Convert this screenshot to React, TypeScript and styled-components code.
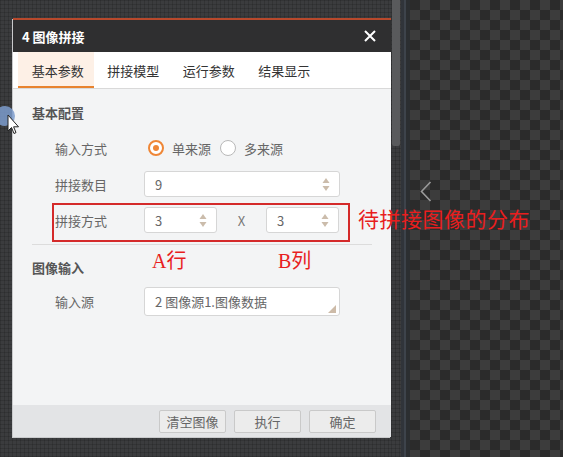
import styled, { createGlobalStyle } from 'styled-components'

const GlobalStyle = createGlobalStyle`
  html, body {
    margin: 0;
    padding: 0;
    width: 100%;
    height: 100%;
    overflow: hidden;
  }
  #root {
    height: 100%;
  }
  body {
    font-family: "Noto Sans CJK SC", "Noto Sans", sans-serif;
    font-size: 13px;
  }
`

const Page = styled.div`
  position: relative;
  display: flex;
  width: 563px;
  height: 457px;
  overflow: hidden;
`

const gridBg = `
  background-color: #3b3c3e;
  background-image:
    repeating-linear-gradient(0deg, rgba(0, 0, 0, 0.14) 0 1px, transparent 1px 4px),
    repeating-linear-gradient(90deg, rgba(0, 0, 0, 0.14) 0 1px, transparent 1px 4px);
`

const LeftPane = styled.div`
  ${gridBg}
  width: 391px;
  flex: none;
  padding: 18px 0 0 13px;
  box-sizing: border-box;
`

const Dialog = styled.div`
  width: 378px;
  height: 419px;
  display: flex;
  flex-direction: column;
  background: #f3f4f5;
  box-shadow: -1px 1px 0 #c9cacc;
`

const TitleBar = styled.div`
  height: 32px;
  flex: none;
  border-top: 2px solid #b8492c;
  background: #2f2f30;
  display: flex;
  align-items: center;
  justify-content: space-between;
  padding: 0 15px 0 9px;
  color: #fff;
  font-weight: 700;
  font-size: 13px;
`

const CloseButton = styled.div`
  width: 12px;
  height: 12px;
  display: flex;
  align-items: center;
  justify-content: center;
`

const TabBar = styled.div`
  height: 36px;
  flex: none;
  background: #fff;
  border-bottom: 1px solid #d9d9d9;
  display: flex;
  padding-left: 5px;
`

const Tab = styled.div<{ $active?: boolean }>`
  width: 75.5px;
  display: flex;
  align-items: center;
  justify-content: center;
  box-sizing: border-box;
  color: #333;
  font-size: 13px;
  background: ${(p) => (p.$active ? '#fdf0e6' : 'transparent')};
  border-bottom: 2px solid ${(p) => (p.$active ? '#e8832e' : 'transparent')};
  padding: 2px 0 0 4px;
`

const Content = styled.div`
  flex: 1;
  padding: 14px 19px 0;
  display: flex;
  flex-direction: column;
`

const SectionTitle = styled.div<{ $gap: number }>`
  line-height: 20px;
  font-weight: 700;
  color: #555;
  font-size: 13px;
  margin-bottom: ${(p) => p.$gap}px;
`

const Rows = styled.div`
  display: flex;
  flex-direction: column;
  gap: 10px;
`

const Row = styled.div<{ $height?: number }>`
  position: relative;
  display: flex;
  align-items: center;
  height: ${(p) => p.$height ?? 26}px;
  padding-left: 23px;
`

const Label = styled.div`
  width: 89px;
  color: #666;
  font-size: 13px;
  flex: none;
`

const RadioGroup = styled.div`
  display: flex;
  align-items: center;
  gap: 9px;
  color: #666;
  padding-left: 4px;
`

const RadioItem = styled.label`
  display: flex;
  align-items: center;
  gap: 8px;
`

const RadioCircle = styled.span<{ $checked?: boolean }>`
  width: 16px;
  height: 16px;
  border-radius: 50%;
  box-sizing: border-box;
  border: ${(p) => (p.$checked ? '2px solid #ef8636' : '1px solid #b9b9b9')};
  background: #fff;
  display: flex;
  align-items: center;
  justify-content: center;

  &::after {
    content: '';
    width: 6px;
    height: 6px;
    border-radius: 50%;
    background: ${(p) => (p.$checked ? '#ef8636' : 'transparent')};
  }
`

const InputBox = styled.div<{ $width: number; $height?: number }>`
  position: relative;
  width: ${(p) => p.$width}px;
  height: ${(p) => p.$height ?? 26}px;
  box-sizing: border-box;
  border: 1px solid #d6d6d6;
  border-radius: 3px;
  background: #fff;
  display: flex;
  align-items: center;
  justify-content: space-between;
  padding: 0 9px 0 10px;
  color: #666;
  font-size: 13px;
  flex: none;
`

const Times = styled.div`
  width: 49px;
  text-align: center;
  color: #777;
  font-size: 13px;
`

const Highlight = styled.div`
  position: absolute;
  left: 20px;
  top: -4px;
  width: 298px;
  height: 39px;
  box-sizing: border-box;
  border: 2px solid #d42a2a;
  pointer-events: none;
`

const RedNote = styled.div<{ $left: number; $top: number; $size: number }>`
  position: absolute;
  left: ${(p) => p.$left}px;
  top: ${(p) => p.$top}px;
  font-size: ${(p) => p.$size}px;
  line-height: 1.2;
  color: #e81e1e;
  font-family: "Liberation Serif", "Noto Sans CJK SC", serif;
  white-space: nowrap;
`

const Callout = styled(RedNote)`
  font-family: "Noto Sans CJK SC", sans-serif;
  letter-spacing: 0.5px;
`

const Separator = styled.div`
  height: 1px;
  background: #dcdcdc;
  margin: 11px 0 13px;
`

const Footer = styled.div`
  height: 32px;
  flex: none;
  background: #e3e4e6;
  display: flex;
  align-items: center;
  justify-content: flex-end;
  gap: 8px;
  padding-right: 15px;
`

const Button = styled.div`
  width: 67px;
  height: 23px;
  box-sizing: border-box;
  border: 1px solid #c9c9c9;
  border-radius: 2px;
  background: #ececec;
  color: #666;
  font-size: 13px;
  display: flex;
  align-items: center;
  justify-content: center;
`

const ScrollStrip = styled.div`
  ${gridBg}
  width: 10px;
  flex: none;
  padding: 0 1px;
  box-sizing: border-box;
`

const ScrollThumb = styled.div`
  height: 146px;
  background: #595a5c;
  border-radius: 0 0 2px 2px;
`

const Divider = styled.div`
  width: 9px;
  flex: none;
  background: #2b2e31;
  border-left: 3px solid #30343a;
  box-sizing: border-box;
  display: flex;
  justify-content: flex-start;

  &::before {
    content: '';
    width: 2px;
    background: #3d434b;
  }
`

const Canvas = styled.div`
  flex: 1;
  background-color: #2b2b2b;
  background-image:
    linear-gradient(45deg, #3c3c3c 25%, transparent 25%, transparent 75%, #3c3c3c 75%),
    linear-gradient(45deg, #3c3c3c 25%, transparent 25%, transparent 75%, #3c3c3c 75%);
  background-size: 20px 20px;
  background-position: 0 0, 10px 10px;
  padding: 181px 0 0 10px;
  box-sizing: border-box;
`

const Cursor = styled.svg`
  position: absolute;
  left: 0;
  top: 104px;
`

const Spinner = () => (
  <svg width="8" height="15" viewBox="0 0 8 15">
    <path d="M4 1 L7.5 6 L0.5 6 Z" fill="#cbbcab" />
    <path d="M4 14 L7.5 9 L0.5 9 Z" fill="#cbbcab" />
  </svg>
)

const App = () => {
  return (
    <Page>
      <GlobalStyle />
      <LeftPane>
        <Dialog>
          <TitleBar>
            <span>4 图像拼接</span>
            <CloseButton>
              <svg width="12" height="12" viewBox="0 0 12 12">
                <path d="M1 1 L11 11 M11 1 L1 11" stroke="#fff" strokeWidth="2" />
              </svg>
            </CloseButton>
          </TitleBar>
          <TabBar>
            <Tab $active>基本参数</Tab>
            <Tab>拼接模型</Tab>
            <Tab>运行参数</Tab>
            <Tab>结果显示</Tab>
          </TabBar>
          <Content>
            <SectionTitle $gap={12}>基本配置</SectionTitle>
            <Rows>
              <Row>
                <Label>输入方式</Label>
                <RadioGroup>
                  <RadioItem>
                    <RadioCircle $checked />
                    单来源
                  </RadioItem>
                  <RadioItem>
                    <RadioCircle />
                    多来源
                  </RadioItem>
                </RadioGroup>
              </Row>
              <Row>
                <Label>拼接数目</Label>
                <InputBox $width={196}>
                  9
                  <Spinner />
                </InputBox>
              </Row>
              <Row>
                <Highlight />
                <Label>拼接方式</Label>
                <InputBox $width={73}>
                  3
                  <Spinner />
                </InputBox>
                <Times>X</Times>
                <InputBox $width={73}>
                  3
                  <Spinner />
                </InputBox>
                <RedNote $left={120} $top={42} $size={20}>A行</RedNote>
                <RedNote $left={246} $top={42} $size={20}>B列</RedNote>
              </Row>
            </Rows>
            <Separator />
            <SectionTitle $gap={9}>图像输入</SectionTitle>
            <Row $height={29}>
              <Label>输入源</Label>
              <InputBox $width={196} $height={29}>
                2 图像源1.图像数据
                <svg width="8" height="8" viewBox="0 0 8 8" style={{ alignSelf: 'flex-end', marginBottom: 2, marginRight: -6 }}>
                  <path d="M8 0 L8 8 L0 8 Z" fill="#cdbba8" />
                </svg>
              </InputBox>
            </Row>
          </Content>
          <Footer>
            <Button>清空图像</Button>
            <Button>执行</Button>
            <Button>确定</Button>
          </Footer>
        </Dialog>
      </LeftPane>
      <ScrollStrip>
        <ScrollThumb />
      </ScrollStrip>
      <Divider />
      <Canvas>
        <svg width="12" height="21" viewBox="0 0 12 21">
          <path d="M10.5 1 L1.5 10.5 L10.5 20" stroke="#9a9a9a" strokeWidth="1.6" fill="none" />
        </svg>
      </Canvas>
      <Callout $left={358} $top={206} $size={21}>
        待拼接图像的分布
      </Callout>
      <Cursor width="22" height="34" viewBox="0 0 22 34">
        <circle cx="5" cy="12" r="10" fill="#7d9ccc" opacity="0.85" />
        <path d="M8 11 L8 27 L11.5 23.5 L14 29.5 L16 28.6 L13.6 22.8 L18.5 22.8 Z" fill="#fff" stroke="#222" strokeWidth="1" strokeLinejoin="round" />
      </Cursor>
    </Page>
  )
}

export default App
